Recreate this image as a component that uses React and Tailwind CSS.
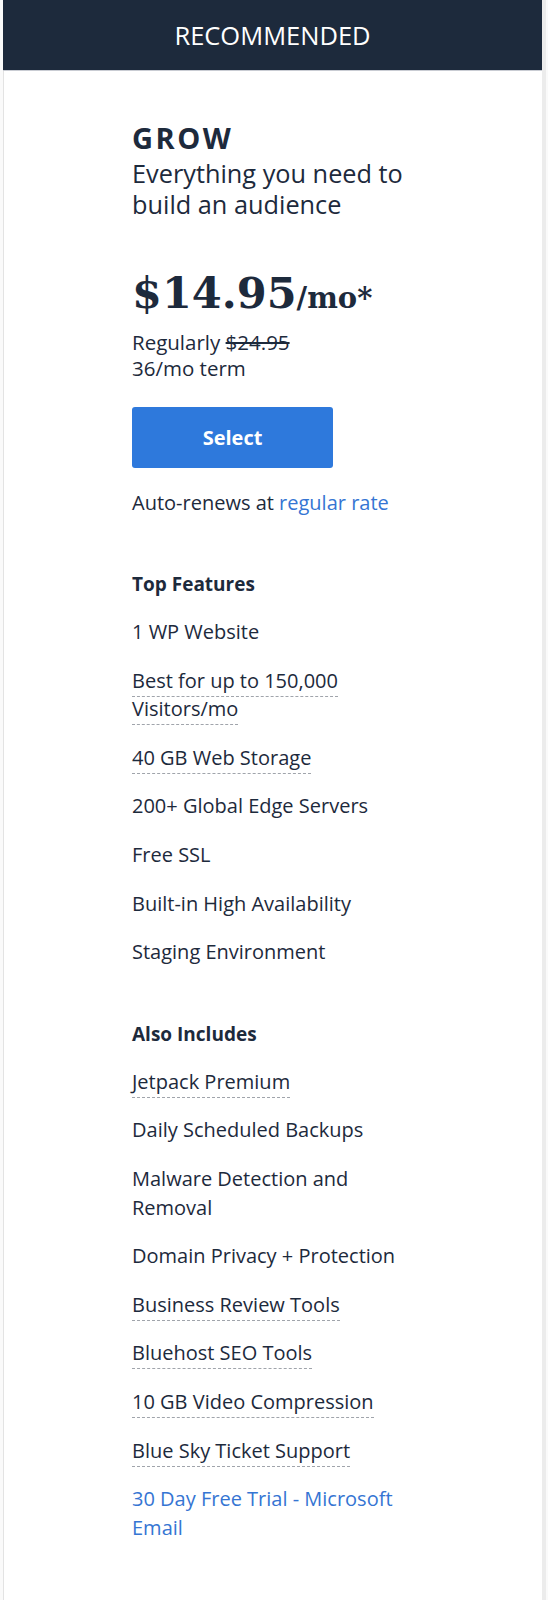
import React from "react";

const font = { fontFamily: '"Open Sans", "Liberation Sans", sans-serif' };

function Item({ children, dashed, link }) {
  return (
    <li className={`text-[20px] leading-[28.6px] ${link ? "text-[#3575d3]" : "text-[#1d2a3c]"}`}>
      {dashed ? (
        <span className="border-b border-dashed border-[#a0a4ab] pb-[2px]">{children}</span>
      ) : (
        children
      )}
    </li>
  );
}

export default function App() {
  return (
    <div className="min-h-[1600px] bg-[#fafafa] pl-[3px] flex" style={font}>
      <div className="w-[539px] min-h-[1600px] bg-white flex flex-col">
        <div className="h-[71px] bg-[#1d2a3c] flex items-center justify-center border-b border-[#c9ccd3]">
          <span className="text-white text-[25.5px] leading-[30px]">RECOMMENDED</span>
        </div>
        <div className="flex-1 border-l border-[#e3e3e3] pl-[128px] pt-[50px] text-[#1d2a3c]">
          <div className="w-[282px]">
            <h2 className="text-[29px] font-bold leading-[34px] tracking-[2.5px]">GROW</h2>
            <p className="text-[25.3px] leading-[31px] mt-[3px]">Everything you need to build an audience</p>
            <div className="mt-[48px] flex items-baseline font-bold" style={{ fontFamily: '"DejaVu Serif", "Liberation Serif", serif' }}>
              <span className="text-[43px] leading-[50px]">$14.95</span>
              <span className="text-[29px] leading-[50px]">/mo*</span>
            </div>
            <div className="mt-[6px] text-[20.5px] leading-[26px]">
              <div>
                Regularly <span className="line-through">$24.95</span>
              </div>
              <div>36/mo term</div>
            </div>
            <button className="mt-[26px] w-[201px] h-[61px] rounded-[3px] bg-[#2e79dc] text-white font-bold text-[20px]">
              Select
            </button>
            <p className="mt-[21px] text-[20px] leading-[28px]">
              Auto-renews at <span className="text-[#3575d3]">regular rate</span>
            </p>
            <h3 className="mt-[53px] text-[19px] font-bold leading-[28px]">Top Features</h3>
            <ul className="mt-[20px] flex flex-col gap-[20px]">
              <Item>1 WP Website</Item>
              <Item dashed>Best for up to 150,000 Visitors/mo</Item>
              <Item dashed>40 GB Web Storage</Item>
              <Item>200+ Global Edge Servers</Item>
              <Item>Free SSL</Item>
              <Item>Built-in High Availability</Item>
              <Item>Staging Environment</Item>
            </ul>
            <h3 className="mt-[53px] text-[19px] font-bold leading-[28px]">Also Includes</h3>
            <ul className="mt-[20px] flex flex-col gap-[20px]">
              <Item dashed>Jetpack Premium</Item>
              <Item>Daily Scheduled Backups</Item>
              <Item>Malware Detection and Removal</Item>
              <Item>Domain Privacy + Protection</Item>
              <Item dashed>Business Review Tools</Item>
              <Item dashed>Bluehost SEO Tools</Item>
              <Item dashed>10 GB Video Compression</Item>
              <Item dashed>Blue Sky Ticket Support</Item>
              <Item link>30 Day Free Trial - Microsoft Email</Item>
            </ul>
          </div>
        </div>
      </div>
      <div className="w-[4px] bg-[#ececec]" />
    </div>
  );
}
